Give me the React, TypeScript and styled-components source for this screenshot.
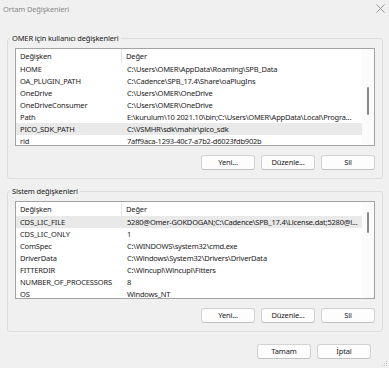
import styled, { createGlobalStyle } from 'styled-components'

type EnvVar = { name: string; value: string; selected?: boolean }

const userVars: EnvVar[] = [
  { name: 'HOME', value: 'C:\\Users\\OMER\\AppData\\Roaming\\SPB_Data' },
  { name: 'OA_PLUGIN_PATH', value: 'C:\\Cadence\\SPB_17.4\\Share\\oaPlugIns' },
  { name: 'OneDrive', value: 'C:\\Users\\OMER\\OneDrive' },
  { name: 'OneDriveConsumer', value: 'C:\\Users\\OMER\\OneDrive' },
  { name: 'Path', value: 'E:\\kurulum\\10 2021.10\\bin;C:\\Users\\OMER\\AppData\\Local\\Progra...' },
  { name: 'PICO_SDK_PATH', value: 'C:\\VSMHR\\sdk\\mahir\\pico_sdk', selected: true },
  { name: 'rid', value: '7aff9aca-1293-40c7-a7b2-d6023fdb902b' },
]

const systemVars: EnvVar[] = [
  { name: 'CDS_LIC_FILE', value: '5280@Omer-GOKDOGAN;C:\\Cadence\\SPB_17.4\\License.dat;5280@l...', selected: true },
  { name: 'CDS_LIC_ONLY', value: '1' },
  { name: 'ComSpec', value: 'C:\\WINDOWS\\system32\\cmd.exe' },
  { name: 'DriverData', value: 'C:\\Windows\\System32\\Drivers\\DriverData' },
  { name: 'FITTERDIR', value: 'C:\\Wincupl\\Wincupl\\Fitters' },
  { name: 'NUMBER_OF_PROCESSORS', value: '8' },
  { name: 'OS', value: 'Windows_NT' },
]

const GlobalStyle = createGlobalStyle`
  html, body {
    margin: 0;
    padding: 0;
  }
  body {
    background: #f0f0f0;
    font-family: 'Noto Sans', 'Open Sans', sans-serif;
    font-size: 7.5px;
    letter-spacing: -0.15px;
    color: #1a1a1a;
  }
`

type VarListProps = {
  vars: EnvVar[]
  thumbTop: number
  thumbHeight: number
}

const VarList = ({ vars, thumbTop, thumbHeight }: VarListProps) => {
  return (
    <StyledList>
      <StyledListMain>
        <StyledHeader>
          <StyledHeaderCell>Değişken</StyledHeaderCell>
          <StyledHeaderCell>Değer</StyledHeaderCell>
        </StyledHeader>
        <StyledRows>
          {vars.map((v) => (
            <StyledRow key={v.name} $selected={v.selected}>
              <StyledNameCell>{v.name}</StyledNameCell>
              <StyledValueCell>{v.value}</StyledValueCell>
            </StyledRow>
          ))}
        </StyledRows>
      </StyledListMain>
      <StyledScrollTrack>
        <StyledScrollThumb $top={thumbTop} $height={thumbHeight} />
      </StyledScrollTrack>
    </StyledList>
  )
}

const ButtonRow = () => (
  <StyledButtonRow>
    <StyledButton>Yeni...</StyledButton>
    <StyledButton>Düzenle...</StyledButton>
    <StyledButton>Sil</StyledButton>
  </StyledButtonRow>
)

const App = () => {
  return (
    <>
      <GlobalStyle />
      <StyledWindow>
        {/* Title */}
        <StyledTitleBar>
          <span>Ortam Değişkenleri</span>
          <svg width="9" height="9" viewBox="0 0 9 9">
            <path d="M0.5 0.5 L8.5 8.5 M8.5 0.5 L0.5 8.5" stroke="#8c8c8c" strokeWidth="0.9" fill="none" />
          </svg>
        </StyledTitleBar>

        <StyledContent>
          {/* User variables */}
          <StyledGroup>
            <StyledLegend>OMER için kullanıcı değişkenleri</StyledLegend>
            <VarList vars={userVars} thumbTop={38} thumbHeight={28} />
            <ButtonRow />
          </StyledGroup>

          {/* System variables */}
          <StyledGroup $spaced>
            <StyledLegend>Sistem değişkenleri</StyledLegend>
            <VarList vars={systemVars} thumbTop={10} thumbHeight={21} />
            <ButtonRow />
          </StyledGroup>
        </StyledContent>

        {/* Footer */}
        <StyledFooter>
          <StyledButton>Tamam</StyledButton>
          <StyledButton>İptal</StyledButton>
        </StyledFooter>

        <StyledGrip width="6" height="6" viewBox="0 0 6 6">
          <rect x="4" y="0" width="1" height="1" fill="#c4c4c4" />
          <rect x="2" y="2" width="1" height="1" fill="#c4c4c4" />
          <rect x="4" y="2" width="1" height="1" fill="#c4c4c4" />
          <rect x="0" y="4" width="1" height="1" fill="#c4c4c4" />
          <rect x="2" y="4" width="1" height="1" fill="#c4c4c4" />
          <rect x="4" y="4" width="1" height="1" fill="#c4c4c4" />
        </StyledGrip>
      </StyledWindow>
    </>
  )
}

export default App

const StyledWindow = styled.div`
  position: relative;
  width: 389px;
  height: 368px;
  display: flex;
  flex-direction: column;
  background: #f0f0f0;
  overflow: hidden;
`

const StyledTitleBar = styled.div`
  height: 17px;
  display: flex;
  align-items: center;
  justify-content: space-between;
  padding: 0 4px 0 3px;
  color: #8a8a8a;
`

const StyledContent = styled.div`
  padding: 16px 6px 0 7px;
  display: flex;
  flex-direction: column;
`

const StyledGroup = styled.fieldset<{ $spaced?: boolean }>`
  margin: ${(p) => (p.$spaced ? '7px' : '0')} 0 0 0;
  min-width: 0;
  border: 1px solid #dcdcdc;
  border-radius: 3px;
  padding: 4px 7px 8px 7px;
`

const StyledLegend = styled.legend`
  padding: 0 2px;
  margin-left: -5px;
  line-height: 11px;
  color: #1a1a1a;
`

const StyledList = styled.div`
  height: 98px;
  box-sizing: border-box;
  border: 1px solid #a3a3a3;
  background: #fff;
  display: flex;
`

const StyledListMain = styled.div`
  flex: 1;
  min-width: 0;
  display: flex;
  flex-direction: column;
`

const StyledHeader = styled.div`
  height: 14px;
  flex: none;
  display: grid;
  grid-template-columns: 106px 1fr;
  align-items: stretch;
`

const StyledHeaderCell = styled.div`
  display: flex;
  align-items: center;
  padding-left: 4px;

  &:first-child {
    border-right: 1px solid #e3e3e3;
  }
`

const StyledRows = styled.div`
  flex: 1;
  overflow: hidden;
`

const StyledRow = styled.div<{ $selected?: boolean }>`
  height: 12px;
  line-height: 12px;
  display: grid;
  grid-template-columns: 106px 1fr;
  background: ${(p) => (p.$selected ? '#e9e9e9' : 'transparent')};
`

const StyledNameCell = styled.div`
  padding-left: 4px;
  white-space: nowrap;
  overflow: hidden;
`

const StyledValueCell = styled.div`
  padding-left: 5px;
  white-space: nowrap;
  overflow: hidden;
  text-overflow: ellipsis;
  letter-spacing: -0.2px;
`

const StyledScrollTrack = styled.div`
  width: 12px;
  flex: none;
  background: #fbfbfb;
  display: flex;
  flex-direction: column;
  align-items: center;
`

const StyledScrollThumb = styled.div<{ $top: number; $height: number }>`
  width: 2px;
  margin-top: ${(p) => p.$top}px;
  height: ${(p) => p.$height}px;
  border-radius: 1px;
  background: #8a8a8a;
`

const StyledButtonRow = styled.div`
  margin-top: 9px;
  display: flex;
  justify-content: flex-end;
  gap: 6px;
`

const StyledButton = styled.button`
  width: 54px;
  height: 15px;
  padding: 0;
  box-sizing: border-box;
  border: 1px solid #d2d2d2;
  border-bottom-color: #c2c2c2;
  border-radius: 3px;
  background: #fdfdfd;
  font-family: inherit;
  font-size: 7.5px;
  letter-spacing: -0.15px;
  color: #1a1a1a;
  line-height: 13px;
`

const StyledFooter = styled.div`
  margin-top: 12px;
  padding-right: 18px;
  display: flex;
  justify-content: flex-end;
  gap: 6px;
`

const StyledGrip = styled.svg`
  position: absolute;
  right: 1px;
  bottom: 1px;
`
